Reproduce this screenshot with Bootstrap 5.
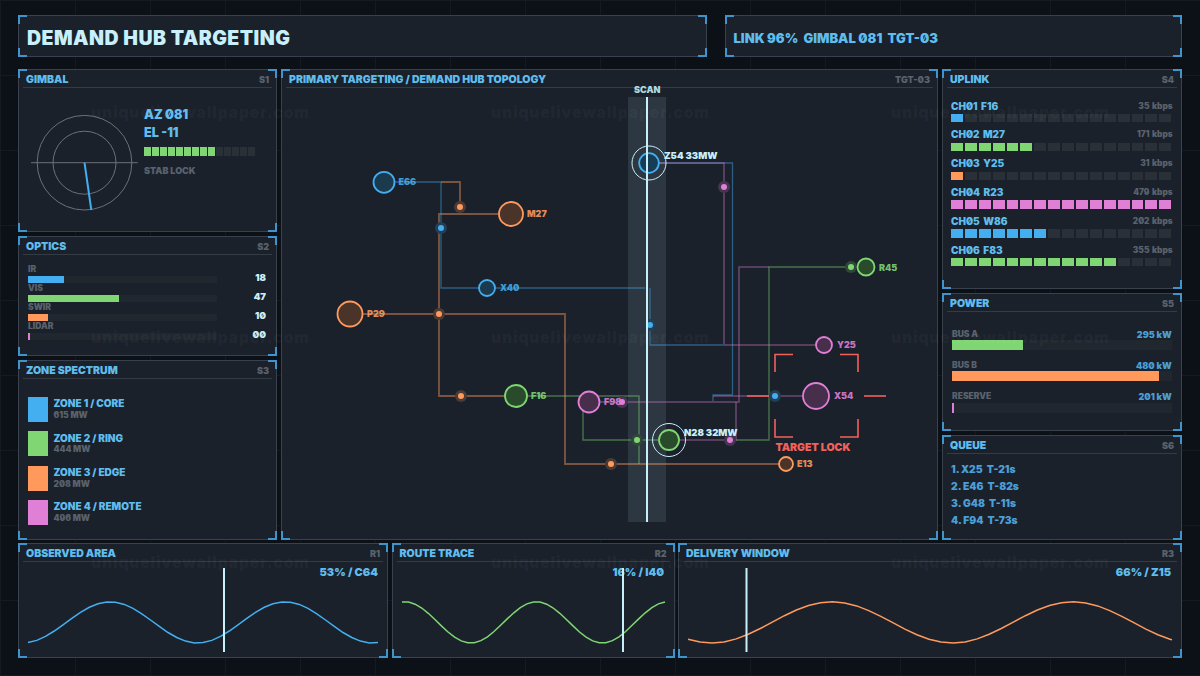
<!DOCTYPE html>
<html lang="en">
<head>
    <meta charset="UTF-8">
    <title>Demand Hub Targeting</title>
    <link rel="stylesheet" href="https://cdn.jsdelivr.net/npm/bootstrap@5.3.0/dist/css/bootstrap.min.css">
    <style>
        :root {
            --c-blue: #43aef0;
            --c-green: #7fd672;
            --c-orange: #ff9a5c;
            --c-pink: #e07fd6;
            --c-red: #f2615c;
            --c-title: #5fbdee;
            --c-ice: #c8f0fb;
            --c-mute: #59626d;
            --c-corner: #3f94cc;
        }
        html, body { height: 100%; }
        body {
            width: 1200px;
            height: 676px;
            overflow: hidden;
            position: relative;
            font-family: Inter, "Liberation Sans", sans-serif;
            font-weight: 900;
            font-feature-settings: "zero" 1;
            background-color: #0c1117;
            background-image:
                linear-gradient(#141a21 1px, transparent 1px),
                linear-gradient(90deg, #141a21 1px, transparent 1px);
            background-size: 75px 75px;
        }
        .hub-page { padding: 15px 18px 0; }
        .hub-panel {
            position: relative;
            background: #1a212b;
            border: 1px solid #39414c;
        }
        .hub-panel::before {
            content: "";
            position: absolute;
            inset: -1px;
            pointer-events: none;
            background:
                linear-gradient(var(--c-corner), var(--c-corner)) 0 0 / 9px 2px no-repeat,
                linear-gradient(var(--c-corner), var(--c-corner)) 0 0 / 2px 9px no-repeat,
                linear-gradient(var(--c-corner), var(--c-corner)) 100% 0 / 9px 2px no-repeat,
                linear-gradient(var(--c-corner), var(--c-corner)) 100% 0 / 2px 9px no-repeat,
                linear-gradient(var(--c-corner), var(--c-corner)) 0 100% / 9px 2px no-repeat,
                linear-gradient(var(--c-corner), var(--c-corner)) 0 100% / 2px 9px no-repeat,
                linear-gradient(var(--c-corner), var(--c-corner)) 100% 100% / 9px 2px no-repeat,
                linear-gradient(var(--c-corner), var(--c-corner)) 100% 100% / 2px 9px no-repeat;
        }
        .top-row { height: 42px; gap: 18px; margin-bottom: 12px; }
        .top-title { width: 689px; padding: 2.5px 0 0 8px; font-size: 19.5px; color: var(--c-ice); line-height: 38px; letter-spacing: .45px; }
        .top-status { width: 457px; padding: 3.5px 0 0 7.5px; font-size: 13px; color: var(--c-title); line-height: 36px; white-space: pre; }
        .main-row { height: 471px; gap: 4px; margin-bottom: 3px; }
        .col-left { width: 259px; gap: 4px; }
        .col-mid { width: 657px; }
        .col-right { width: 240px; gap: 4px; }
        .panel-head {
            height: 18px;
            margin: 0 4px;
            padding: 2px 3px 0;
            border-bottom: 1px solid #333b45;
            font-size: 10.5px;
            color: var(--c-title);
        }
        .panel-tag { font-size: 9px; color: var(--c-mute); }
        .bottom-row { height: 115px; gap: 3.5px; }
        .bottom-row svg { display: block; width: 100%; height: 95px; }

        .gimbal-panel { height: 163px; }
        .gimbal-dial { width: 114px; height: 115px; margin: 17px 0 0 9px; flex: none; }
        .gimbal-read { margin: 19px 0 0 2px; }
        .gimbal-line { font-size: 12.5px; line-height: 15px; color: var(--c-title); margin-bottom: 2.5px; }
        .seg-row { display: flex; gap: 1px; margin-top: 7.5px; }
        .seg-row i { display: block; width: 7px; height: 9px; background: #293038; }
        .gimbal-note { font-size: 9px; line-height: 12px; margin-top: 8.5px; color: var(--c-mute); }

        .optics-panel { height: 120px; }
        .optics-body { padding: 8.5px 10px 0 9px; }
        .optics-label { font-size: 8.5px; line-height: 10px; color: var(--c-mute); }
        .optics-line { height: 7px; margin: 2px 0 .3px; }
        .optics-track { width: 189px; height: 7px; background: #20272f; }
        .optics-track div { height: 100%; }
        .optics-val { font-size: 9.5px; line-height: 7px; color: var(--c-ice); margin-top: -2px; }

        .zone-panel { height: 180px; }
        .zone-body { padding: 18px 0 0 9px; }
        .zone-row { height: 25px; gap: 6px; margin-bottom: 9.4px; }
        .zone-swatch { width: 19.5px; height: 25px; }
        .zone-name { font-size: 10px; line-height: 11.7px; color: var(--c-title); padding-top: 1px; }
        .zone-sub { font-size: 8.5px; line-height: 11.7px; color: var(--c-mute); }

        .uplink-panel { height: 220px; }
        .uplink-body { padding: 11.7px 8.3px 0 8px; }
        .uplink-head { line-height: 12px; font-size: 10px; color: var(--c-title); word-spacing: 1.5px; }
        .uplink-rate { font-size: 8.3px; color: var(--c-mute); word-spacing: 1px; }
        .uplink-segs { margin: 2.3px 0 6px; gap: 2px; }
        .uplink-segs i { display: block; width: 11.9px; height: 8.5px; background: #293038; }

        .power-panel { height: 138px; }
        .power-body { padding: 16.5px 9.3px 0 9px; }
        .power-label { line-height: 11px; font-size: 8.5px; color: var(--c-mute); }
        .power-val { font-size: 9px; color: #4a9fd8; }
        .power-track { height: 10px; margin: .5px 0 9.8px; background: #20272f; }
        .power-track div { height: 100%; }

        .queue-panel { flex-grow: 1; }
        .queue-body { padding: 7.2px 0 0 8px; }
        .queue-line { font-size: 10.3px; line-height: 16.9px; color: #4a9fd8; white-space: pre; }

        .topo-canvas { display: block; overflow: visible; }
        .node-label { font-size: 9px; font-weight: 900; fill-opacity: .9; }
        .hot-label { font-size: 9.5px; font-weight: 900; fill: var(--c-ice); }
        .lock-label { font-size: 10.5px; font-weight: 900; fill: var(--c-red); }
        .chart-note { font-size: 11px; font-weight: 900; fill: var(--c-title); text-anchor: end; }

        .wm-layer {
            position: absolute;
            top: 103px;
            left: 91px;
            pointer-events: none;
            display: grid;
            grid-template-columns: repeat(3, 218px);
            column-gap: 182px;
            grid-auto-rows: 20px;
            row-gap: 205px;
        }
        .wm-layer span {
            font-size: 15.5px;
            line-height: 20px;
            letter-spacing: .9px;
            white-space: nowrap;
            color: rgba(255, 255, 255, .045);
        }
    </style>
</head>
<body>
    <div class="hub-page">
        <div class="d-flex top-row">
            <div class="hub-panel top-title">DEMAND HUB TARGETING</div>
            <div class="hub-panel top-status">LINK 96%  GIMBAL 081  TGT-03</div>
        </div>

        <div class="d-flex main-row">
            <div class="d-flex flex-column col-left">
                <div class="hub-panel gimbal-panel">
                    <div class="panel-head d-flex justify-content-between align-items-center"><span>GIMBAL</span><span class="panel-tag">S1</span></div>
                    <div class="d-flex">
                        <svg class="gimbal-dial" viewBox="28 105 114 115">
                            <g fill="none" stroke="#6a7178" stroke-width="1">
                                <circle cx="84.5" cy="162.7" r="47.3"/>
                                <circle cx="84.5" cy="162.7" r="31.5"/>
                                <path d="M31 162.7H137.7"/>
                            </g>
                            <path d="M84.5 162.7L91.3 210" stroke="#43aef0" stroke-width="2"/>
                        </svg>
                        <div class="gimbal-read">
                            <div class="gimbal-line">AZ 081</div>
                            <div class="gimbal-line">EL -11</div>
                            <div class="seg-row" id="gimbalSegs"></div>
                            <div class="gimbal-note">STAB LOCK</div>
                        </div>
                    </div>
                </div>

                <div class="hub-panel optics-panel">
                    <div class="panel-head d-flex justify-content-between align-items-center"><span>OPTICS</span><span class="panel-tag">S2</span></div>
                    <div class="optics-body" id="opticsBody"></div>
                </div>

                <div class="hub-panel zone-panel">
                    <div class="panel-head d-flex justify-content-between align-items-center"><span>ZONE SPECTRUM</span><span class="panel-tag">S3</span></div>
                    <div class="zone-body" id="zoneBody"></div>
                </div>
            </div>

            <div class="hub-panel col-mid">
                <div class="panel-head d-flex justify-content-between align-items-center"><span>PRIMARY TARGETING / DEMAND HUB TOPOLOGY</span><span class="panel-tag">TGT-03</span></div>
                <svg width="655" height="451" viewBox="282 88 655 451" class="topo-canvas">
                    <rect x="628" y="97" width="38" height="425" fill="#c8f0fb" fill-opacity=".11"/>

                    <!-- wires -->
                    <g fill="none" stroke="#ff9a5c" stroke-opacity=".42" stroke-width="1.9">
                        <path d="M441 182H460V207"/>
                        <path d="M511 214H439V396H516"/>
                        <path d="M350 314H565V464H786"/>
                    </g>
                    <g fill="none" stroke="#43aef0" stroke-opacity=".45" stroke-width="1.3">
                        <path d="M384 182H441V288H645"/>
                        <path d="M650 288V345H723"/>
                        <path d="M649 163H732.5V395H713V401"/>
                    </g>
                    <g fill="none" stroke="#7fd672" stroke-opacity=".45" stroke-width="1.4">
                        <path d="M516 396H639V464"/>
                        <path d="M583 402V440H669"/>
                        <path d="M866 267H769V440H730"/>
                    </g>
                    <g fill="none" stroke="#e07fd6" stroke-opacity=".42" stroke-width="1.5">
                        <path d="M649 163H724V345H824"/>
                        <path d="M589 402H739V267H769"/>
                        <path d="M816 396H713"/>
                        <path d="M669 440H736V402"/>
                    </g>

                    <!-- small junction nodes -->
                    <g id="junctions"></g>

                    <!-- hub nodes -->
                    <g stroke-width="1.8">
                        <circle cx="384" cy="182.3" r="10.5" stroke="#43aef0" fill="#1b3a4e"/>
                        <circle cx="487" cy="288" r="8" stroke="#43aef0" fill="#1b3a4e"/>
                        <circle cx="649" cy="163" r="9.8" stroke="#43aef0" fill="#163c56"/>
                        <circle cx="511" cy="214" r="12" stroke="#ff9a5c" fill="#4a3329"/>
                        <circle cx="350" cy="314" r="12.5" stroke="#ff9a5c" fill="#4a3329"/>
                        <circle cx="786" cy="464" r="7" stroke="#ff9a5c" fill="#4a3329"/>
                        <circle cx="516" cy="396" r="11" stroke="#7fd672" fill="#2a4a2c"/>
                        <circle cx="669" cy="440" r="10" stroke="#7fd672" fill="#2a4a2c"/>
                        <circle cx="866" cy="267" r="8.5" stroke="#7fd672" fill="#2a4a2c"/>
                        <circle cx="589" cy="402" r="10.5" stroke="#e07fd6" fill="#472e4a"/>
                        <circle cx="824" cy="345" r="8" stroke="#e07fd6" fill="#472e4a"/>
                        <circle cx="816" cy="396" r="13" stroke="#e07fd6" fill="#472e4a"/>
                    </g>
                    <g fill="none" stroke="#c8f0fb" stroke-width="1">
                        <circle cx="649" cy="163" r="17"/>
                        <circle cx="669" cy="440" r="16.5"/>
                    </g>

                    <!-- target lock bracket -->
                    <g fill="none" stroke="#f2615c" stroke-width="1.6">
                        <path d="M775 372V354.5H793"/>
                        <path d="M840 354.5H858V372"/>
                        <path d="M775 419V437H793"/>
                        <path d="M840 437H858V419"/>
                        <path d="M747 396H769"/>
                        <path d="M864 396H886"/>
                    </g>

                    <rect x="646" y="97" width="2" height="425" fill="#c8f0fb"/>

                    <g class="node-label">
                        <text x="398.5" y="185.3" fill="#43aef0">E66</text>
                        <text x="500" y="291" fill="#43aef0">X40</text>
                        <text x="527" y="217" fill="#ff9a5c">M27</text>
                        <text x="367" y="317" fill="#ff9a5c">P29</text>
                        <text x="797" y="467" fill="#ff9a5c">E13</text>
                        <text x="531" y="399" fill="#7fd672">F16</text>
                        <text x="879" y="270.5" fill="#7fd672">R45</text>
                        <text x="604" y="405" fill="#e07fd6">F98</text>
                        <text x="837" y="348" fill="#e07fd6">Y25</text>
                        <text x="834" y="398.5" fill="#e07fd6">X54</text>
                    </g>
                    <text x="634" y="93" class="node-label" fill="#c8f0fb">SCAN</text>
                    <text x="664" y="158.5" class="hot-label">Z54 33MW</text>
                    <text x="684" y="436" class="hot-label">N28 32MW</text>
                    <text x="775.5" y="451" class="lock-label">TARGET LOCK</text>
                </svg>
            </div>

            <div class="d-flex flex-column col-right">
                <div class="hub-panel uplink-panel">
                    <div class="panel-head d-flex justify-content-between align-items-center"><span>UPLINK</span><span class="panel-tag">S4</span></div>
                    <div class="uplink-body" id="uplinkBody"></div>
                </div>
                <div class="hub-panel power-panel">
                    <div class="panel-head d-flex justify-content-between align-items-center"><span>POWER</span><span class="panel-tag">S5</span></div>
                    <div class="power-body" id="powerBody"></div>
                </div>
                <div class="hub-panel queue-panel">
                    <div class="panel-head d-flex justify-content-between align-items-center"><span>QUEUE</span><span class="panel-tag">S6</span></div>
                    <div class="queue-body">
                        <div class="queue-line">1. X25  T-21s</div>
                        <div class="queue-line">2. E46  T-82s</div>
                        <div class="queue-line">3. G48  T-11s</div>
                        <div class="queue-line">4. F94  T-73s</div>
                    </div>
                </div>
            </div>
        </div>

        <div class="d-flex bottom-row">
            <div class="hub-panel" style="width: 370px">
                <div class="panel-head d-flex justify-content-between align-items-center"><span>OBSERVED AREA</span><span class="panel-tag">R1</span></div>
                <svg viewBox="19 562 368 95">
                    <polyline id="chart1" fill="none" stroke="#43aef0" stroke-width="1.5"/>
                    <rect x="223" y="568" width="2" height="84" fill="#c8f0fb"/>
                    <text x="378" y="576" class="chart-note">53% / C64</text>
                </svg>
            </div>
            <div class="hub-panel" style="width: 283px">
                <div class="panel-head d-flex justify-content-between align-items-center"><span>ROUTE TRACE</span><span class="panel-tag">R2</span></div>
                <svg viewBox="393 562 281 95">
                    <polyline id="chart2" fill="none" stroke="#7fd672" stroke-width="1.5"/>
                    <text x="664" y="576" class="chart-note">16% / I40</text>
                    <rect x="622" y="568" width="2" height="84" fill="#c8f0fb"/>
                </svg>
            </div>
            <div class="hub-panel" style="width: 504px">
                <div class="panel-head d-flex justify-content-between align-items-center"><span>DELIVERY WINDOW</span><span class="panel-tag">R3</span></div>
                <svg viewBox="679 562 502 95">
                    <polyline id="chart3" fill="none" stroke="#ff9a5c" stroke-width="1.5"/>
                    <rect x="745.5" y="568" width="2" height="84" fill="#c8f0fb"/>
                    <text x="1171" y="576" class="chart-note">66% / Z15</text>
                </svg>
            </div>
        </div>
    </div>

    <div class="wm-layer" id="wmLayer"></div>

    <script>
        const BLUE = '#43aef0', GREEN = '#7fd672', ORANGE = '#ff9a5c', PINK = '#e07fd6';

        let html = '';
        for (let i = 0; i < 14; i++) {
            html += `<i${i < 9 ? ` style="background:${GREEN}"` : ''}></i>`;
        }
        document.getElementById('gimbalSegs').innerHTML = html;

        const optics = [['IR', 19, BLUE, '18'], ['VIS', 48, GREEN, '47'], ['SWIR', 10.8, ORANGE, '10'], ['LIDAR', 0.8, PINK, '00']];
        document.getElementById('opticsBody').innerHTML = optics.map(o => `
            <div class="optics-label">${o[0]}</div>
            <div class="optics-line d-flex justify-content-between">
                <div class="optics-track"><div style="width:${o[1]}%;background:${o[2]}"></div></div>
                <div class="optics-val">${o[3]}</div>
            </div>`).join('');

        const zones = [['ZONE 1 / CORE', '615 MW', BLUE], ['ZONE 2 / RING', '444 MW', GREEN], ['ZONE 3 / EDGE', '208 MW', ORANGE], ['ZONE 4 / REMOTE', '496 MW', PINK]];
        document.getElementById('zoneBody').innerHTML = zones.map(z => `
            <div class="zone-row d-flex align-items-center">
                <div class="zone-swatch" style="background:${z[2]}"></div>
                <div><div class="zone-name">${z[0]}</div><div class="zone-sub">${z[1]}</div></div>
            </div>`).join('');

        const channels = [['CH01 F16', '35 kbps', 1, BLUE], ['CH02 M27', '171 kbps', 6, GREEN], ['CH03 Y25', '31 kbps', 1, ORANGE], ['CH04 R23', '479 kbps', 16, PINK], ['CH05 W86', '202 kbps', 7, BLUE], ['CH06 F83', '355 kbps', 12, GREEN]];
        document.getElementById('uplinkBody').innerHTML = channels.map(c => {
            let segs = '';
            for (let i = 0; i < 16; i++) {
                segs += `<i${i < c[2] ? ` style="background:${c[3]}"` : ''}></i>`;
            }
            return `<div class="uplink-head d-flex justify-content-between align-items-center"><span>${c[0]}</span><span class="uplink-rate">${c[1]}</span></div>
                <div class="uplink-segs d-flex">${segs}</div>`;
        }).join('');

        const buses = [['BUS A', '295 kW', 32.4, GREEN], ['BUS B', '480 kW', 94, ORANGE], ['RESERVE', '201 kW', 1, PINK]];
        document.getElementById('powerBody').innerHTML = buses.map(b => `
            <div class="power-label d-flex justify-content-between align-items-center"><span>${b[0]}</span><span class="power-val">${b[1]}</span></div>
            <div class="power-track"><div style="width:${b[2]}%;background:${b[3]}"></div></div>`).join('');

        // x, y, colour of the small junction dots on the wires
        const junctions = [[460, 207, ORANGE], [439, 314, ORANGE], [461, 396, ORANGE], [611, 464, ORANGE], [441, 228, BLUE], [650, 325, BLUE], [775, 396, BLUE], [637, 440, GREEN], [851, 267, GREEN], [724, 187, PINK], [730, 440, PINK], [622, 402, PINK]];
        document.getElementById('junctions').innerHTML = junctions.map(j =>
            `<circle cx="${j[0]}" cy="${j[1]}" r="6" fill="#1a212b"/><circle cx="${j[0]}" cy="${j[1]}" r="6" fill="${j[2]}" fill-opacity=".22"/><circle cx="${j[0]}" cy="${j[1]}" r="3" fill="${j[2]}"/>`).join('');

        // sine traces: id, x from, x to, x of a peak, period
        const charts = [['chart1', 28, 378, 110, 175], ['chart2', 402, 665, 405, 131.5], ['chart3', 688, 1172, 832, 241]];
        charts.forEach(c => {
            const pts = [];
            const step = c[4] / 20;
            for (let x = c[1]; x < c[2]; x += step) {
                pts.push(x.toFixed(1) + ',' + (622.4 - 20.6 * Math.cos(2 * Math.PI * (x - c[3]) / c[4])).toFixed(1));
            }
            pts.push(c[2] + ',' + (622.4 - 20.6 * Math.cos(2 * Math.PI * (c[2] - c[3]) / c[4])).toFixed(1));
            document.getElementById(c[0]).setAttribute('points', pts.join(' '));
        });

        document.getElementById('wmLayer').innerHTML = '<span>uniquelivewallpaper.com</span>'.repeat(9);
    </script>
    <script src="https://cdn.jsdelivr.net/npm/bootstrap@5.3.0/dist/js/bootstrap.bundle.min.js"></script>
</body>
</html>
